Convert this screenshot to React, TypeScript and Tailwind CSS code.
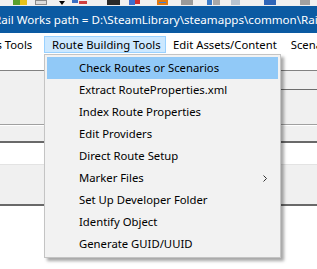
import React from "react";

const menuItems = [
  "Check Routes or Scenarios",
  "Extract RouteProperties.xml",
  "Index Route Properties",
  "Edit Providers",
  "Direct Route Setup",
  "Marker Files",
  "Set Up Developer Folder",
  "Identify Object",
  "Generate GUID/UUID",
];

// partial toolbar icons peeking above the title bar
const ToolbarStrip = () => (
  <div className="h-[6px] bg-[#f0f0f0] overflow-hidden flex items-start">
    <div className="ml-[13px] w-[7px] h-[5px] bg-[#5aa02c]" />
    <div className="w-[7px] h-[5px] bg-[#e8c21a]" />
    <div className="ml-[8px] w-[12px] h-[5px] border border-[#8a8a8a] bg-[#dcdcdc]" />
    <div className="ml-[12px] mt-[1px] w-0 h-0 border-l-[3px] border-r-[3px] border-t-[4px] border-l-transparent border-r-transparent border-t-black" />
    <div className="ml-[7px] w-[6px] h-[3px] bg-[#3a6fc4]" />
    <div className="ml-[1px] mt-[1px] w-[8px] h-[3px] bg-[#d04040]" />
    <div className="ml-[20px] w-[13px] h-[5px] bg-[#2a2a2a]" />
    <div className="ml-[9px] w-[6px] h-[5px] bg-[#3d6fd0]" />
    <div className="w-[5px] h-[4px] bg-[#d03030]" />
    <div className="ml-[17px] w-[11px] h-[5px] border-2 border-[#e07a10] bg-[#3f7fd8]" />
    <div className="ml-[13px] w-[12px] h-[5px] bg-[#9a9a9a]" />
    <div className="ml-[14px] w-[5px] h-[5px] bg-[#3a7bc8]" />
    <div className="ml-[1px] w-[7px] h-[5px] bg-[#a8a8a8]" />
    <div className="ml-[11px] w-[9px] h-[5px] bg-[#b8c4d0]" />
    <div className="ml-[24px] w-[12px] h-[5px] bg-[#2f66b8]" />
    <div className="ml-[24px] w-[10px] h-[5px] bg-[#a0a0a0]" />
  </div>
);

const App = () => {
  return (
    <div
      className="relative w-[317px] h-[269px] overflow-hidden bg-white flex flex-col"
      style={{ fontFamily: '"Noto Sans", "Open Sans", sans-serif' }}
    >
      <ToolbarStrip />

      {/* title bar */}
      <div className="h-[27px] bg-[#0b5aa2] text-white text-[11.6px] leading-[27px] whitespace-nowrap overflow-hidden">
        <span className="ml-[-6px]">Rail Works path = D:\SteamLibrary\steamapps\common\RailWorks\</span>
      </div>

      {/* menu bar */}
      <div className="h-[21px] bg-white flex items-start pt-[3px] text-[11.3px] leading-[15px] text-black whitespace-nowrap overflow-hidden">
        <div className="shrink-0 ml-[-52px] w-[96px] h-[17px] px-[7px] py-px">Statistics Tools</div>
        <div className="shrink-0 w-[122px] h-[17px] px-[7px] border border-[#99d1ff] bg-[#cce8ff]">Route Building Tools</div>
        <div className="shrink-0 h-[17px] px-[7px] py-px">Edit Assets/Content</div>
        <div className="shrink-0 h-[17px] px-[7px] py-px">Scenario Tools</div>
      </div>

      {/* window body behind the menu */}
      <div className="h-[17px] bg-white border-b border-[#828282]" />
      <div className="h-[54px] bg-[#f0f0f0] border-b border-[#a0a0a0] flex flex-col">
        <div className="h-[18px]" />
        <div className="ml-[200px] h-px bg-[#6d6d6d]" />
      </div>
      <div className="h-[18px] bg-[#f0f0f0] border-t border-white border-b-2 border-b-[#696969]" />
      <div className="h-[22px] bg-white border-b border-[#e3e3e3]" />
      <div className="h-[41px] bg-[#f0f0f0] border-b-2 border-[#696969]" />
      <div className="flex-1 bg-white" />

      {/* dropdown */}
      <div className="absolute left-[44px] top-[54px] w-[237px] bg-[#f2f2f2] border border-[#c4c4c4] p-[2px] shadow-[3px_3px_3px_rgba(0,0,0,0.35)] text-[11.3px] text-black flex flex-col">
        {menuItems.map((item, i) => (
          <div
            key={item}
            className={`h-[22px] flex items-center justify-between pl-[32px] pr-[11px] whitespace-nowrap ${
              i === 0 ? "bg-[#91c9f7]" : ""
            }`}
          >
            <span>{item}</span>
            {item === "Marker Files" && (
              <svg width="4" height="7" viewBox="0 0 4 7">
                <path d="M0.5 0.5 L3.5 3.5 L0.5 6.5" fill="none" stroke="#333" strokeWidth="1" />
              </svg>
            )}
          </div>
        ))}
      </div>
    </div>
  );
};

export default App;
